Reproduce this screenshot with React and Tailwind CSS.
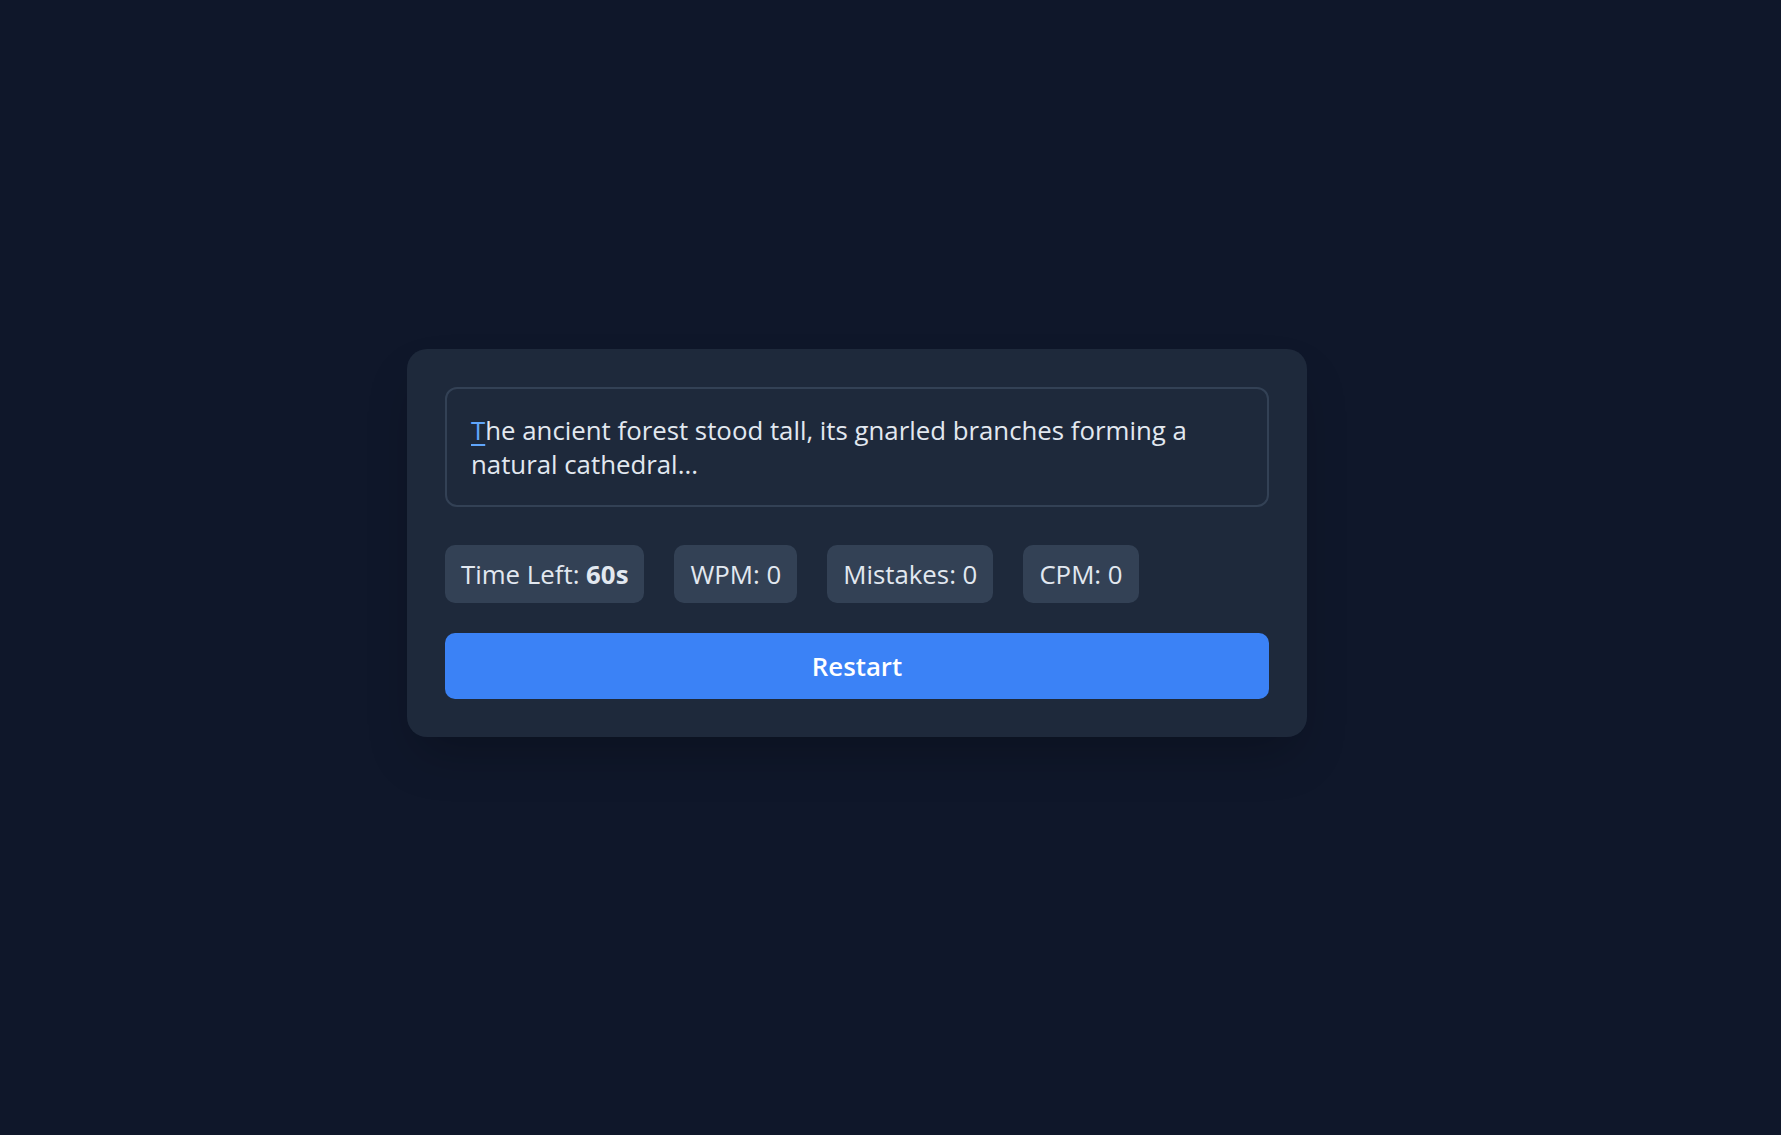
import { useState } from 'react';

const passage = 'The ancient forest stood tall, its gnarled branches forming a natural cathedral...';

function Stat({ label, children }) {
  return (
    <div className="rounded-[10px] bg-[#334155] px-4 py-3 leading-[34px] text-[#e2e8f0]">
      {label}: {children}
    </div>
  );
}

export default function App() {
  const [time] = useState(60);

  return (
    <div
      className="flex min-h-screen w-full items-center justify-center bg-[#0f172a] pr-[67px] pb-[49px]"
      style={{ fontFamily: '"Open Sans", "DejaVu Sans", sans-serif' }}
    >
      <div className="w-[900px] rounded-[20px] bg-[#1e293b] p-[38px] text-[25.8px] shadow-2xl">
        <div className="rounded-xl border-2 border-[#334155] px-6 py-6 leading-[34px] text-[#e2e8f0]">
          <span className="text-[#60a5fa] underline underline-offset-4">{passage[0]}</span>
          {passage.slice(1)}
        </div>

        <div className="mt-[38px] flex gap-[30px]">
          <Stat label="Time Left">
            <span className="font-bold">{time}s</span>
          </Stat>
          <Stat label="WPM">0</Stat>
          <Stat label="Mistakes">0</Stat>
          <Stat label="CPM">0</Stat>
        </div>

        <button className="mt-[30px] w-full rounded-[10px] bg-[#3b82f6] py-4 leading-[34px] font-semibold text-white">
          Restart
        </button>
      </div>
    </div>
  );
}
